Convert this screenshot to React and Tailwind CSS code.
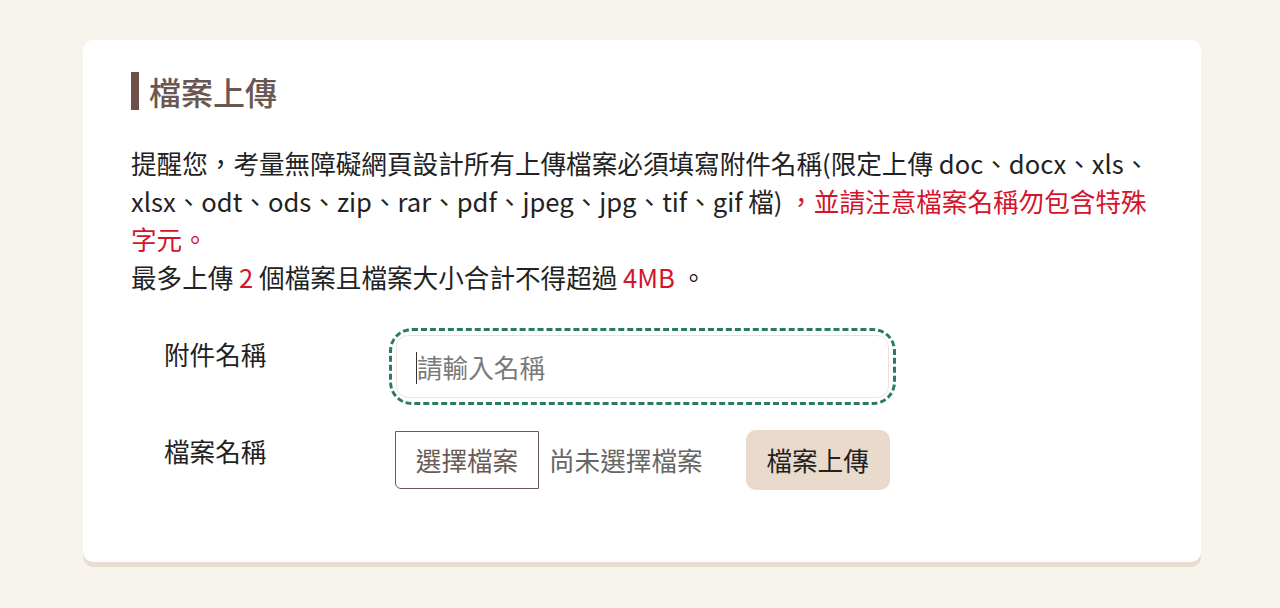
import React from 'react';

const font = { fontFamily: '"Noto Sans CJK TC", "Noto Sans", sans-serif' };

export default function App() {
  return (
    <div className="min-h-screen bg-[#f7f3ed] pt-10 pl-[83px] pr-[79px]" style={font}>
      <div className="bg-white rounded-[10px] shadow-[0_5px_0_#e9ddd1] pt-8 pb-[72px] px-12">
        <h2 className="flex items-center h-[38px] text-[32px] font-medium text-[#6a5752] leading-none">
          <span className="w-2 h-[38px] bg-[#6c5048] mr-[10px]"></span>
          檔案上傳
        </h2>

        <p className="mt-[34px] text-[25.6px] leading-[38px] text-[#222]">
          提醒您，考量無障礙網頁設計所有上傳檔案必須填寫附件名稱(限定上傳 doc、docx、xls、xlsx、odt、ods、zip、rar、pdf、jpeg、jpg、tif、gif 檔){' '}
          <span className="text-[#d3142c]">，並請注意檔案名稱勿包含特殊字元。</span>
          <br />
          最多上傳 <span className="text-[#d3142c]">2</span> 個檔案且檔案大小合計不得超過 <span className="text-[#d3142c]">4MB</span> 。
        </p>

        <div className="mt-[39px] flex items-start">
          <label className="w-[265px] pl-[33px] shrink-0 text-[25.6px] leading-[38px] text-[#222]">附件名稱</label>
          <div className="relative w-[493px] rounded-[16px] outline-[3px] outline-dashed outline-[#2b7a68] outline-offset-[4px]">
            <input
              type="text"
              placeholder="請輸入名稱"
              className="w-full h-[63px] rounded-[12px] border border-[#ece4da] bg-white px-5 text-[25.6px] text-[#222] placeholder:text-[#7a7a7a] focus:outline-none"
              style={font}
            />
            <span className="absolute left-5 top-[17px] w-px h-[32px] bg-[#333]"></span>
          </div>
        </div>

        <div className="mt-8 flex items-start">
          <label className="w-[265px] pl-[33px] shrink-0 pt-[2px] text-[25.6px] leading-[38px] text-[#222]">檔案名稱</label>
          <div className="flex items-center -ml-[1px]">
            <span className="h-[58px] w-[144px] flex items-center justify-center border border-[#6b5a55] rounded-bl-[6px] text-[25.6px] text-[#6a5a56]">
              選擇檔案
            </span>
            <span className="ml-[10px] text-[25.6px] text-[#666]">尚未選擇檔案</span>
            <button className="ml-[43px] h-[60px] w-[144px] rounded-[10px] bg-[#e9dacb] text-[25.6px] text-[#222]" style={font}>
              檔案上傳
            </button>
          </div>
        </div>
      </div>
    </div>
  );
}
